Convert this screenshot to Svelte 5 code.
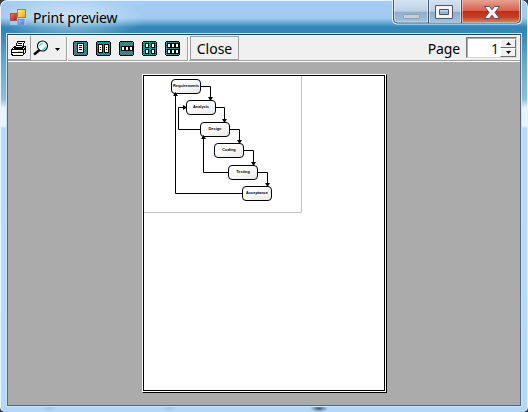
<script>
  const nodes = [
    { x: 171, y: 79, t: 'Requirements' },
    { x: 186, y: 100, t: 'Analysis' },
    { x: 200, y: 122, t: 'Design' },
    { x: 214, y: 143, t: 'Coding' },
    { x: 228, y: 165, t: 'Testing' },
    { x: 242, y: 186, t: 'Acceptance' }
  ];
  const edges = [
    'M200 86.5H210.5V100', 'M215 107.5H224.5V122', 'M229 129.5H239.5V143',
    'M243 150.5H253.5V165', 'M257 172.5H267.5V186',
    'M200 129.5H178.5V107.5H186', 'M228 172.5H203.5V137', 'M242 193.5H175.5V94'
  ];
  const heads = [
    'M208 97h5l-2.5 4z', 'M222 119h5l-2.5 4z', 'M237 140h5l-2.5 4z', 'M251 162h5l-2.5 4z',
    'M265 183h5l-2.5 4z', 'M183 105v5l4-2.5z', 'M201 139h5l-2.5-4z', 'M173 96h5l-2.5-4z'
  ];
  // Page outlines of each layout button: x, y, outer width, outer height
  const layouts = [
    [[4, 2, 7, 10]],
    [[2, 3, 5, 9], [8, 3, 5, 9]],
    [[2, 5, 4, 5], [6, 5, 4, 5], [10, 5, 4, 5]],
    [[3, 2, 4, 5], [9, 2, 4, 5], [3, 8, 4, 5], [9, 8, 4, 5]],
    [[2, 2, 4, 5], [6, 2, 4, 5], [10, 2, 4, 5], [2, 8, 4, 5], [6, 8, 4, 5], [10, 8, 4, 5]]
  ];
</script>

<div class="window">
  <header>
    <svg class="app" width="18" height="18" viewBox="0 0 18 18">
      <defs>
        <linearGradient id="gold" x2="1" y2="1"><stop stop-color="#fff3a0" /><stop offset="1" stop-color="#eca500" /></linearGradient>
        <linearGradient id="red" x2="1" y2="1"><stop stop-color="#e87a70" /><stop offset="1" stop-color="#a91d17" /></linearGradient>
        <linearGradient id="blue" x2="1" y2="1"><stop stop-color="#a8c8ff" /><stop offset="1" stop-color="#3f78dc" /></linearGradient>
      </defs>
      <path d="M1 1h16v16H1z" fill="#c5d3dc" fill-opacity=".7" />
      <rect x="1.5" y="5.5" width="6" height="7" fill="url(#red)" stroke="#b94848" />
      <rect x="9" y="11.500" width="6" height="5" fill="url(#blue)" stroke="#6792df" />
      <rect x="8.5" y="1.5" width="8" height="8" fill="url(#gold)" stroke="#bd7c18" />
    </svg>
    <h1>Print preview</h1>
    <svg class="controls" width="130" height="25" viewBox="0 0 130 25">
      <defs>
        <linearGradient id="glass" x2="0" y2="1"><stop stop-color="#d4e3f1" /><stop offset=".47" stop-color="#bdd0e3" /><stop offset=".5" stop-color="#8fadc9" /><stop offset="1" stop-color="#a8c6df" /></linearGradient>
        <linearGradient id="exit" x2="0" y2="1"><stop stop-color="#e5a293" /><stop offset=".47" stop-color="#d6604b" /><stop offset=".5" stop-color="#bd2d15" /><stop offset=".75" stop-color="#c83f24" /><stop offset="1" stop-color="#e18a64" /></linearGradient>
      </defs>
      <path d="M.5 0v20q0 4 4 4h121q4 0 4-4V0" fill="url(#glass)" stroke="#e2effa" />
      <path d="M69 0h59v19q0 4-4 4H69z" fill="url(#exit)" />
      <path d="M1.500 0v19q0 4 4 4h119q4 0 4-4V0M36.500 0v23M69.500 0v23" fill="none" stroke="#43566b" />
      <path d="M2.500 0v19q0 3 3 3h30V0M37.500 0v22.500h31V0M70.500 0v22.500h53q4 0 4-4V0" fill="none" stroke="#fff" stroke-opacity=".45" />
      <rect x="11.500" y="14.500" width="16" height="4" rx="1" fill="#c5d0db" stroke="#8ca0b4" />
      <path fill-rule="evenodd" d="M43.500 5.500h17v13h-17zM47.500 9.500v5h9v-5z" fill="#f1f3f5" stroke="#4d5668" />
      <path d="M92.500 6.500h5l2.500 3.300 2.500-3.300h5l-4.500 6 4.500 6h-5l-2.500-3.300-2.500 3.300h-5l4.500-6z" fill="#f4f4f4" stroke="#5a5064" />
    </svg>
  </header>

  <main>
    <div class="toolbar">
      <div class="print">
        <svg width="18" height="17" viewBox="0 0 18 17" shape-rendering="crispEdges">
          <path d="M5.500 7.500l2-6h7l-2 6z" fill="#fff" stroke="#000" />
          <path d="M8 3.500h4M7 5.500h5" stroke="#000" />
          <path d="M1.500 9.500l3-3h1l-1 2h8l1-2h2v6l-3 3h-10l-1-2z" fill="#fff" stroke="#000" />
          <path d="M2 9.500h11M2 12.500h11M13.500 9v6M14 9.500l2-2" fill="none" stroke="#000" />
          <path d="M8 11h3" stroke="#e3d200" />
        </svg>
      </div>
      <svg class="zoom" width="28" height="18" viewBox="0 0 28 18">
        <path d="M6.500 10L1 14.500" stroke="#000" stroke-width="2.500" />
        <circle cx="9.500" cy="6" r="5" fill="#f4ffff" stroke="#000" stroke-width="1.100" />
        <path d="M6.500 6q.5-2.500 3-3M9.500 9.500q2.500-.2 3-3" fill="none" stroke="#00e5e5" stroke-width="1.200" />
        <path d="M22 8h5l-2.500 3z" />
      </svg>
      <i class="sep"></i>
      <div class="layouts">
        {#each layouts as cells, n}
          <svg width="15" height="15" viewBox="0 0 15 15" shape-rendering="crispEdges">
            <defs><pattern id="dots{n}" width="2" height="2" patternUnits="userSpaceOnUse"><path d="M0 0h2v2H0z" fill="#008484" /><path d="M0 0h1v1H0zM1 1h1v1H1z" fill="#559292" /></pattern></defs>
            <path d="M1 0h13v1h1v13h-1v1H1v-1H0V1h1z" />
            <path d="M1 1h13v13H1z" fill="url(#dots{n})" />
            {#each cells as [x, y, w, h]}
              <rect {x} {y} width={w} height={h} />
              <rect x={x + 1} y={y + 1} width={w - 2} height={h - 2} fill="#fff" />
            {/each}
            {#if n === 0}<path d="M6 4.500h3M6 6.500h3M6 8.500h3" stroke="#000080" />{/if}
            {#if n === 1}<path d="M4 6.500h1M4 8.500h1M10 6.500h1M10 8.500h1" stroke="#000080" />{/if}
          </svg>
        {/each}
      </div>
      <i class="sep second"></i>
      <button>Close</button>
      <span class="label">Page</span>
      <div class="spin">
        <span>1</span>
        <div class="arrows"><b><svg width="5" height="3"><path d="M0 3h5L2.500 0z" /></svg></b><b><svg width="5" height="3"><path d="M0 0h5L2.500 3z" /></svg></b></div>
      </div>
    </div>

    <div class="canvas">
      <div class="paper">
        <div class="sheet">
          <svg width="240" height="314" viewBox="144 76 240 314">
            <defs><linearGradient id="box" x2="1" y2="1"><stop offset=".3" stop-color="#fff" /><stop offset="1" stop-color="#e8e8e8" /></linearGradient></defs>
            <path d="M144 212.500H301.500V76" fill="none" stroke="#c0c0c0" />
            {#each edges as d}<path {d} fill="none" stroke="#000" />{/each}
            {#each nodes as n}
              <rect x={n.x + 0.5} y={n.y + 0.5} width="29" height="14" rx="3.500" fill="url(#box)" stroke="#000" />
              <text x={n.x + 15} y={n.y + 8.300} text-anchor="middle">{n.t}</text>
            {/each}
            {#each heads as d}<path {d} />{/each}
          </svg>
        </div>
      </div>
    </div>
  </main>
</div>

<style>
  :global(body) { background: #343a42; overflow: hidden; }
  * { box-sizing: border-box; }
  .window {
    width: 528px; height: 412px; padding: 0 6px 6px; display: flex; flex-direction: column;
    border: 1px solid #e8f4ff; border-bottom: 0; border-radius: 7px 7px 5px 5px;
    font-family: "Noto Sans", "Open Sans", sans-serif;
    background:
      radial-gradient(ellipse at 50% 50%, #40566e, transparent 70%) 309px 404px / 18px 7px no-repeat,
      radial-gradient(ellipse at 50% 50%, #7fa6cc60, transparent 70%) 40px 404px / 16px 7px no-repeat,
      radial-gradient(ellipse at 50% 50%, #7fa6cc60, transparent 70%) 160px 404px / 16px 7px no-repeat,
      radial-gradient(ellipse 75px 22px at 70px 17px, #e5f1fbb0, transparent),
      linear-gradient(#a6cdf2 0, #a0c9f1 17px, #67a6d1 22px, #3485b7 26px, #3787bb 33px, #67a6cb 60px, #8ebfda 98px, #e9f4fc 107px, #e9f4fc 125px, #b9dafa 127px, #b6d8f8 412px);
  }
  header { height: 33px; flex: none; display: flex; align-items: flex-start; }
  .app { margin: 7px 0 0 2px; }
  h1 { font-size: 14px; font-weight: 400; line-height: 20px; margin: 7px 0 0 6px; color: #000; letter-spacing: -.15px; }
  .controls { margin: -1px -1px 0 auto; }
  main { width: 514px; height: 372px; border: 1px solid #53687a; border-top-color: #174866; box-shadow: 0 0 0 1px #c9e5f8; display: flex; flex-direction: column; }
  .toolbar { height: 27px; flex: none; background: #f0f0f0; border-bottom: 1px solid #fff; box-shadow: inset 0 -1px #a0a0a0; display: flex; align-items: flex-start; }
  .print { width: 23px; height: 25px; padding: 4px 0 0 2px; border-right: 1px solid #a0a0a0; border-bottom: 1px solid #a0a0a0; border-top: 1px solid #fff; }
  .zoom { margin: 5px 0 0 2px; }
  .sep { width: 2px; height: 24px; margin: 2px 0 0 5px; border-left: 1px solid #a0a0a0; border-right: 1px solid #fff; }
  .layouts { display: flex; gap: 8px; margin: 6px 0 0 5px; }
  .sep.second { margin-left: 7px; }
  button { width: 49px; height: 24px; margin: 1px 0 0 1px; padding: 1px 0 0; background: #f0f0f0; border: 1px solid #a0a0a0; font: 14px/20px "Noto Sans", sans-serif; color: #000; }
  .label { margin: 4px 6px 0 auto; font-size: 14px; line-height: 20px; letter-spacing: -.15px; }
  .spin { width: 51px; height: 21px; margin: 2px 3px 0 0; background: #fff; border: 1px solid; border-color: #777 #d8d8d8 #d8d8d8 #777; box-shadow: inset 1px 1px #aaa; display: flex; justify-content: flex-end; font-size: 14px; line-height: 22px; }
  .spin span { margin-right: 1px; color: #151515; }
  .arrows { width: 16px; height: 18px; margin-top: 1px; display: flex; flex-direction: column; }
  .arrows b { height: 9px; background: #f0f0f0; border: 1px solid; border-color: #fff #707070 #707070 #fff; display: flex; align-items: center; justify-content: center; }
  .canvas { flex: 1; background: #ababab; display: flex; justify-content: center; padding: 12px 0 0 0; }
  .paper { width: 245px; height: 319px; background: #fff; border: 1px solid; border-color: #fff #000 #000 #fff; }
  .sheet { width: 242px; height: 316px; border: 1px solid #000; background: #fff; overflow: hidden; }
  .sheet svg { display: block; }
  text { font: bold 3.900px "Liberation Sans", sans-serif; }
</style>
